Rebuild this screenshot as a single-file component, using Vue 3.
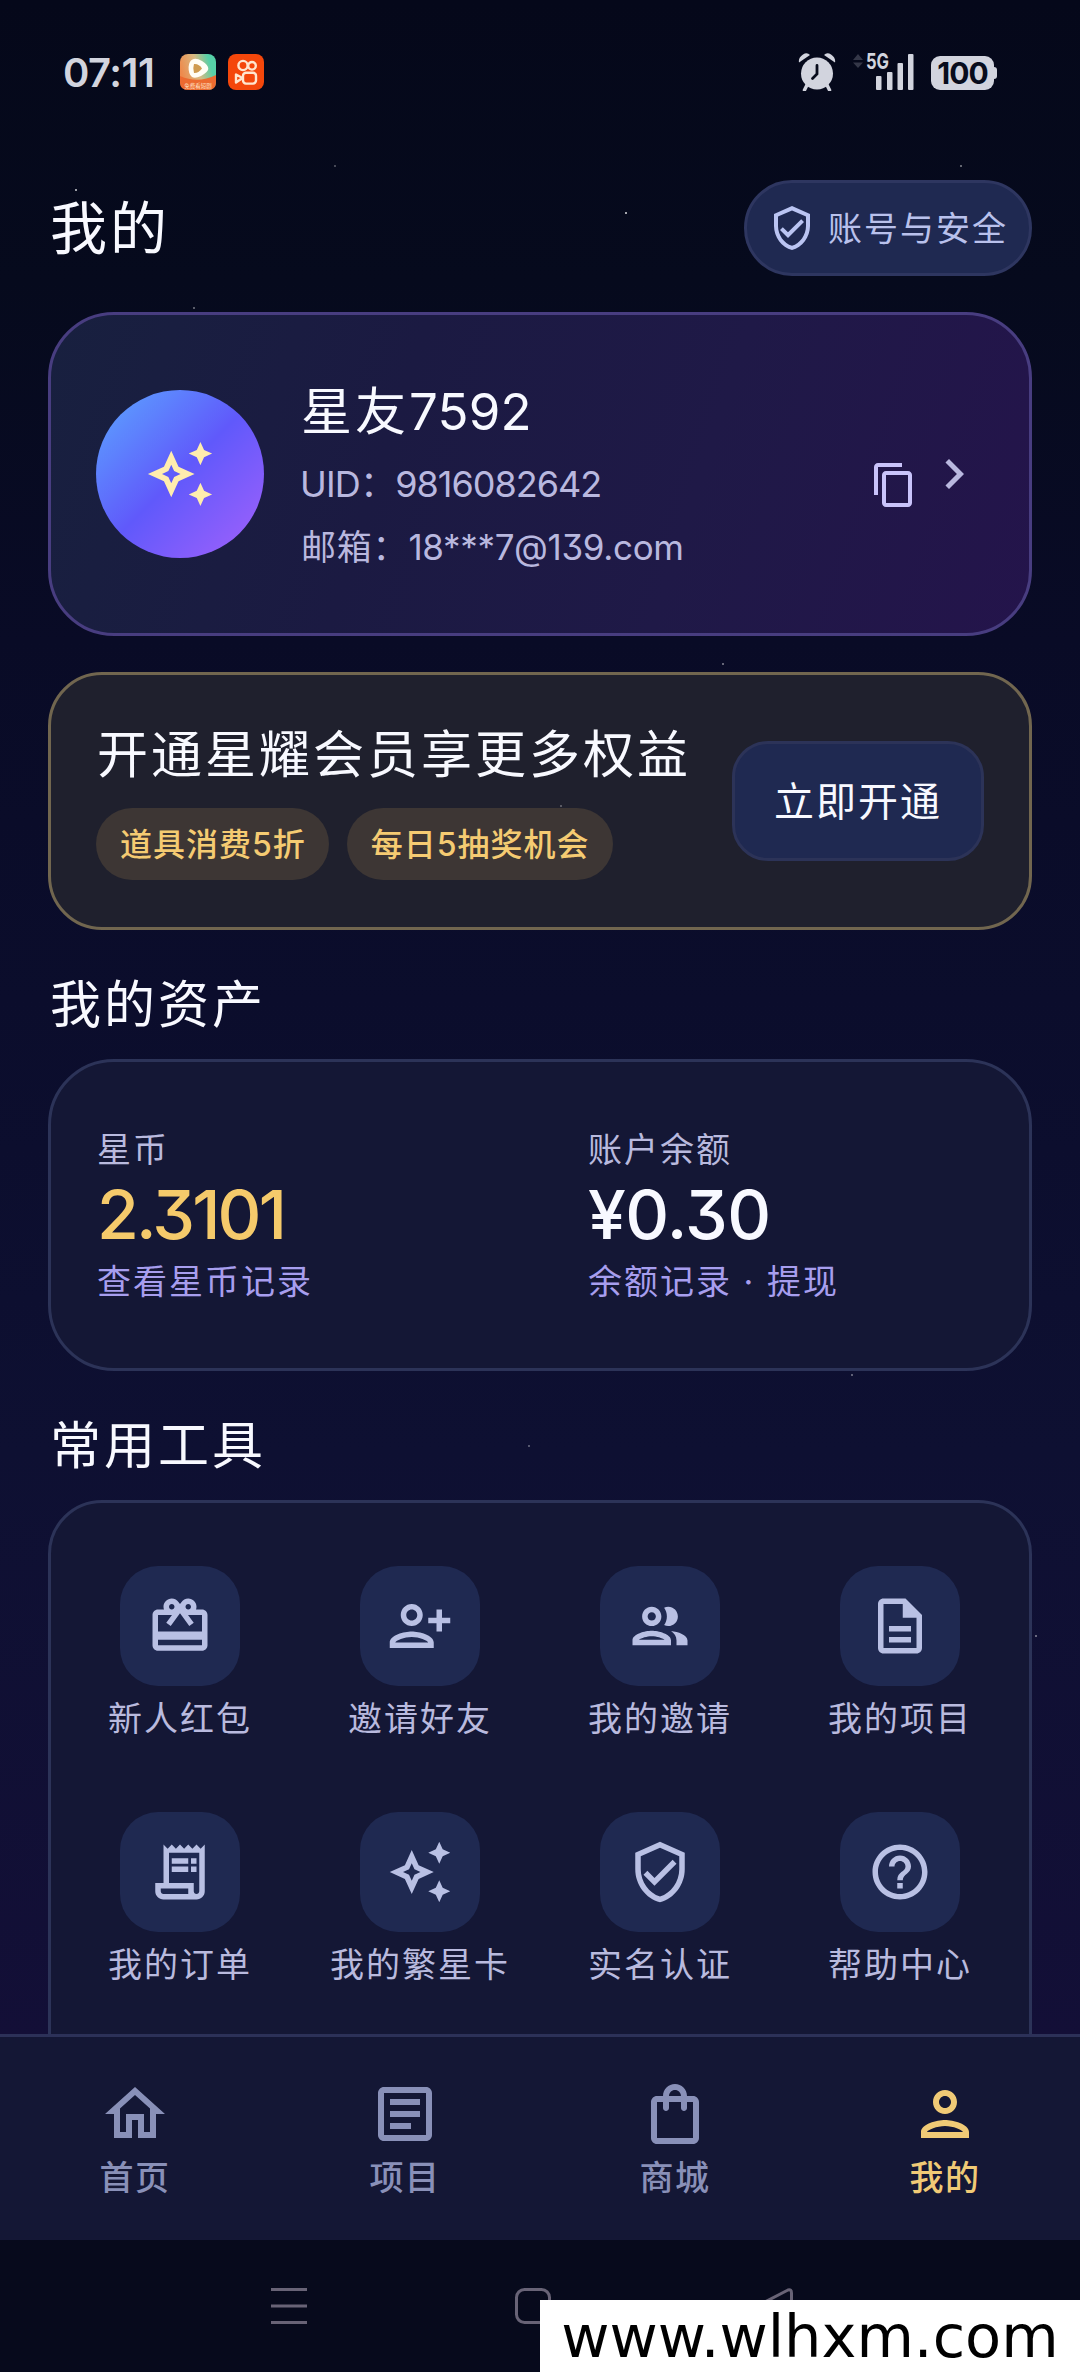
<script setup>
const paths = {
  sparkle: 'M19 9l1.25-2.75L23 5l-2.75-1.25L19 1l-1.25 2.75L15 5l2.75 1.25L19 9zM19 15l-1.25 2.75L15 19l2.75 1.25L19 23l1.25-2.75L23 19l-2.75-1.25L19 15zM11.5 9.5L9 4 6.5 9.5 1 12l5.5 2.5L9 20l2.5-5.5L17 12l-5.5-2.5zM9.99 12.99L9 15.17l-.99-2.18L5.83 12l2.18-.99L9 8.83l.99 2.18 2.18.99-2.18.99z',
  shield: 'M12 1L3 5v6c0 5.55 3.84 10.74 9 12 5.16-1.26 9-6.45 9-12V5l-9-4zm7 10c0 4.52-2.98 8.69-7 9.93-4.02-1.24-7-5.41-7-9.93V6.3l7-3.11 7 3.11V11zm-11.59.59L6 13l4 4 8-8-1.41-1.42L10 14.17z',
  copy: 'M16 1H4c-1.1 0-2 .9-2 2v14h2V3h12V1zm3 4H8c-1.1 0-2 .9-2 2v14c0 1.1.9 2 2 2h11c1.1 0 2-.9 2-2V7c0-1.1-.9-2-2-2zm0 16H8V7h11v14z',
  chevron: 'M10 6L8.59 7.41 13.17 12l-4.58 4.59L10 18l6-6z',
  redeem: 'M20 6h-2.18c.11-.31.18-.65.18-1 0-1.66-1.34-3-3-3-1.05 0-1.96.54-2.5 1.35l-.5.67-.5-.68C10.96 2.54 10.05 2 9 2 7.34 2 6 3.34 6 5c0 .35.07.69.18 1H4c-1.11 0-1.99.89-1.99 2L2 19c0 1.11.89 2 2 2h16c1.11 0 2-.89 2-2V8c0-1.11-.89-2-2-2zm-5-2c.55 0 1 .45 1 1s-.45 1-1 1-1-.45-1-1 .45-1 1-1zM9 4c.55 0 1 .45 1 1s-.45 1-1 1-1-.45-1-1 .45-1 1-1zm11 15H4v-2h16v2zm0-5H4V8h5.08L7 10.83 8.62 12 11 8.76l1-1.36 1 1.36L15.38 12 17 10.83 14.92 8H20v6z',
  personAdd: 'M13 8c0-2.21-1.79-4-4-4S5 5.79 5 8s1.79 4 4 4 4-1.79 4-4zm-2 0c0 1.1-.9 2-2 2s-2-.9-2-2 .9-2 2-2 2 .9 2 2zM1 18v2h16v-2c0-2.66-5.33-4-8-4s-8 1.34-8 4zm2 0c.2-.71 3.3-2 6-2 2.69 0 5.78 1.28 6 2H3zM20 9V6h-2v3h-3v2h3v3h2v-3h3V9h-3z',
  group: 'M9 13.75c-2.34 0-7 1.17-7 3.5V19h14v-1.75c0-2.33-4.66-3.5-7-3.5zM4.34 17c.84-.58 2.87-1.25 4.66-1.25s3.82.67 4.66 1.25H4.34zM9 12c1.93 0 3.5-1.57 3.5-3.5S10.93 5 9 5 5.5 6.57 5.5 8.5 7.07 12 9 12zm0-5c.83 0 1.5.67 1.5 1.5S9.83 10 9 10s-1.5-.67-1.5-1.5S8.17 7 9 7zm7.04 6.81c1.16.84 1.96 1.96 1.96 3.44V19h4v-1.75c0-2.02-3.5-3.17-5.96-3.44zM15 12c1.93 0 3.5-1.57 3.5-3.5S16.93 5 15 5c-.54 0-1.04.13-1.5.35.63.89 1 1.98 1 3.15s-.37 2.26-1 3.15c.46.22.96.35 1.5.35z',
  doc: 'M8 16h8v2H8zm0-4h8v2H8zm6-10H6c-1.1 0-2 .9-2 2v16c0 1.1.89 2 1.99 2H18c1.1 0 2-.9 2-2V8l-6-6zm4 18H6V4h7v5h5v11z',
  receipt: 'M19.5 3.5L18 2l-1.5 1.5L15 2l-1.5 1.5L12 2l-1.5 1.5L9 2 7.5 3.5 6 2v14H3v3c0 1.66 1.34 3 3 3h12c1.66 0 3-1.34 3-3V2l-1.5 1.5zM15 20H6c-.55 0-1-.45-1-1v-1h10v2zm4-1c0 .55-.45 1-1 1s-1-.45-1-1v-3H8V5h11v14zM9 7h6v2H9zM16 7h2v2h-2zM9 10h6v2H9zM16 10h2v2h-2z',
  help: 'M11 18h2v-2h-2v2zm1-16C6.48 2 2 6.48 2 12s4.48 10 10 10 10-4.48 10-10S17.52 2 12 2zm0 18c-4.41 0-8-3.59-8-8s3.59-8 8-8 8 3.59 8 8-3.59 8-8 8zm0-14c-2.21 0-4 1.79-4 4h2c0-1.1.9-2 2-2s2 .9 2 2c0 2-3 1.75-3 5h2c0-2.25 3-2.5 3-5 0-2.21-1.79-4-4-4z',
  home: 'M12 5.69l5 4.5V18h-2v-6H9v6H7v-7.81l5-4.5M12 3L2 12h3v8h6v-6h2v6h6v-8h3L12 3z',
  article: 'M19 5v14H5V5h14m0-2H5c-1.1 0-2 .9-2 2v14c0 1.1.9 2 2 2h14c1.1 0 2-.9 2-2V5c0-1.1-.9-2-2-2zM14 17H7v-2h7v2zm3-4H7v-2h10v2zm0-4H7V7h10v2z',
  bag: 'M18 6h-2c0-2.21-1.79-4-4-4S8 3.79 8 6H6c-1.1 0-2 .9-2 2v12c0 1.1.9 2 2 2h12c1.1 0 2-.9 2-2V8c0-1.1-.9-2-2-2zm-6-2c1.1 0 2 .9 2 2h-4c0-1.1.9-2 2-2zm6 16H6V8h2v2c0 .55.45 1 1 1s1-.45 1-1V8h4v2c0 .55.45 1 1 1s1-.45 1-1V8h2v12z',
  person: 'M12 6c1.1 0 2 .9 2 2s-.9 2-2 2-2-.9-2-2 .9-2 2-2m0 10c2.7 0 5.8 1.29 6 2H6c.23-.72 3.31-2 6-2m0-12C9.79 4 8 5.79 8 8s1.79 4 4 4 4-1.79 4-4-1.79-4-4-4zm0 10c-2.67 0-8 1.34-8 4v2h16v-2c0-2.66-5.33-4-8-4z',
}

const tools = [
  { icon: 'redeem', label: '新人红包' },
  { icon: 'personAdd', label: '邀请好友' },
  { icon: 'group', label: '我的邀请' },
  { icon: 'doc', label: '我的项目' },
  { icon: 'receipt', label: '我的订单' },
  { icon: 'sparkle', label: '我的繁星卡' },
  { icon: 'shield', label: '实名认证' },
  { icon: 'help', label: '帮助中心' },
]

const tabs = [
  { icon: 'home', label: '首页' },
  { icon: 'article', label: '项目' },
  { icon: 'bag', label: '商城' },
  { icon: 'person', label: '我的', active: true },
]

const stars = [
  [335, 166, 0.35], [76, 190, 0.8], [626, 213, 0.85], [961, 166, 0.5], [194, 308, 0.45],
  [723, 664, 0.5], [561, 806, 0.35], [852, 1375, 0.45], [529, 1446, 0.4], [1036, 1636, 0.5],
]
</script>

<template>
  <div class="screen">
    <header class="status">
      <span class="time">07:11</span>
      <svg class="app" viewBox="0 0 36 36">
        <defs>
          <linearGradient id="video" x1="0" y1="0.4" x2="1" y2="0.1">
            <stop offset="0" stop-color="#ee8a4c" />
            <stop offset="0.45" stop-color="#d9b981" />
            <stop offset="0.8" stop-color="#56d0a8" />
          </linearGradient>
        </defs>
        <rect width="36" height="36" rx="8" fill="url(#video)" />
        <path d="M0 22 Q18 30 36 21 V28 Q36 36 28 36 H8 Q0 36 0 28Z" fill="#ec6a30" />
        <path d="M12.5 5.5Q9 7 8.6 13Q8.300 20 12 23Q15 25 21 22Q28 18 28.300 15Q28.500 11 22 7Q16 3.500 12.500 5.500Z" fill="#fffdf5" />
        <path d="M14 10Q12.500 14 14 19Q18 19.500 22 14.500Q19 9.500 14 10Z" fill="#cf9b50" />
        <text x="18" y="33.500" text-anchor="middle" font-size="5.500" fill="#ffe3c8">免费看短剧</text>
      </svg>
      <svg class="app second" viewBox="0 0 36 36">
        <rect width="36" height="36" rx="8" fill="#f4470b" />
        <g fill="none" stroke="#ffe6cf" stroke-width="2.400">
          <circle cx="15" cy="11.500" r="4.600" />
          <circle cx="24" cy="11.800" r="3.800" />
          <rect x="15" y="18.800" width="13" height="10.800" rx="3" />
          <path d="M14.500 24L8 20.500V28.500Z" stroke-linejoin="round" />
        </g>
      </svg>
      <span class="grow"></span>
      <svg class="alarm" viewBox="0 0 38 38" fill="#d2d4de">
        <path d="M1 9.500Q0 5 5 1.500Q9 -1 12 2Z" />
        <path d="M37 9.500Q38 5 33 1.500Q29 -1 26 2Z" />
        <circle cx="19" cy="20.500" r="16" />
        <path d="M9 32L6.500 37M29 32L31.500 37" stroke="#d2d4de" stroke-width="3.500" stroke-linecap="round" />
        <path d="M19 12.500V21L14.500 25.500" fill="none" stroke="#080c1c" stroke-width="2.800" stroke-linecap="round" />
      </svg>
      <svg class="signal" viewBox="0 -8 62 46">
        <path d="M6 1L11 7H1ZM6 15L11 9.500H1Z" fill="#343748" />
        <text x="14" y="16" class="net" textLength="23" lengthAdjust="spacingAndGlyphs">5G</text>
        <g fill="#d2d4de">
          <rect x="24" y="23" width="5.500" height="14" rx="1" />
          <rect x="35" y="19" width="5.500" height="18" rx="1" />
          <rect x="45.500" y="10" width="5.500" height="27" rx="1" />
          <rect x="56" y="1" width="5.500" height="36" rx="1" />
        </g>
      </svg>
      <div class="battery"><b>100</b></div>
      <i class="nub"></i>
    </header>

    <div class="head">
      <h1>我的</h1>
      <div class="safe">
        <svg viewBox="0 0 24 24"><path :d="paths.shield" /></svg>
        <span>账号与安全</span>
      </div>
    </div>

    <section class="card profile">
      <div class="avatar"><svg viewBox="0 0 24 24"><path :d="paths.sparkle" /></svg></div>
      <div class="info">
        <div class="name">星友<span>7592</span></div>
        <div class="line uid">UID：<span>9816082642</span></div>
        <div class="line mail">邮箱：<span>18***7@139.com</span></div>
      </div>
      <svg class="copy" viewBox="0 0 24 24"><path :d="paths.copy" /></svg>
      <svg class="chevron" viewBox="0 0 24 24"><path :d="paths.chevron" /></svg>
    </section>

    <section class="card vip">
      <div>
        <div class="vip-title">开通星耀会员享更多权益</div>
        <div class="chips"><span>道具消费5折</span><span>每日5抽奖机会</span></div>
      </div>
      <div class="open">立即开通</div>
    </section>

    <h2>我的资产</h2>
    <section class="card assets">
      <div class="asset">
        <div class="label">星币</div>
        <div class="value gold">2.3101</div>
        <div class="link">查看星币记录</div>
      </div>
      <div class="asset">
        <div class="label">账户余额</div>
        <div class="value">¥0.30</div>
        <div class="link">余额记录 · 提现</div>
      </div>
    </section>

    <h2>常用工具</h2>
    <section class="card tools">
      <div v-for="t in tools" :key="t.label" class="tool">
        <div class="tile"><svg viewBox="0 0 24 24"><path :d="paths[t.icon]" /></svg></div>
        <span>{{ t.label }}</span>
      </div>
    </section>

    <nav class="tabs">
      <div v-for="t in tabs" :key="t.label" class="tab" :class="{ active: t.active }">
        <svg viewBox="0 0 24 24"><path :d="paths[t.icon]" /></svg>
        <span>{{ t.label }}</span>
      </div>
    </nav>

    <footer class="system">
      <svg viewBox="0 0 40 40"><path d="M2 3.500H38M2 20H38M2 36.500H38" /></svg>
      <svg viewBox="0 0 40 40"><rect x="3.500" y="3.500" width="33" height="33" rx="8" /></svg>
      <svg viewBox="0 0 40 40"><path d="M31 4L3 18.500Q0.500 20 3 21.500L31 36Q34.500 37 34.500 33V7Q34.500 3 31 4Z" /></svg>
    </footer>

    <i
      v-for="(s, i) in stars"
      :key="i"
      class="star"
      :style="{ left: s[0] - 1 + 'px', top: s[1] - 1 + 'px', opacity: s[2] }"
    ></i>
    <div class="site">www.wlhxm.com</div>
  </div>
</template>

<style>
body {
  margin: 0;
  background: #070a1c;
}
</style>

<style scoped>
.screen {
  position: relative;
  display: flex;
  flex-direction: column;
  width: 1080px;
  height: 2372px;
  overflow: hidden;
  box-sizing: border-box;
  background: linear-gradient(180deg, #05081a 0, #060a1d 280px, #090b26 640px, #0b0d2c 1000px, #0e1032 1450px, #130f37 2040px);
  color: #f8f9ff;
  font-family: Inter, "Noto Sans CJK SC", sans-serif;
  font-feature-settings: "cv09";
  white-space: nowrap;
}
svg {
  display: block;
  flex: none;
}
.status {
  flex: none;
  display: flex;
  align-items: center;
  height: 144px;
  padding: 0 83px 0 63px;
  box-sizing: border-box;
}
.time {
  width: 117px;
  font-size: 40px;
  font-weight: 600;
  letter-spacing: -0.5px;
  color: #d2d4de;
}
.app {
  width: 36px;
  height: 36px;
}
.second {
  margin-left: 12px;
}
.grow {
  flex: 1;
}
.alarm {
  width: 38px;
  height: 38px;
  margin-right: 16px;
}
.signal {
  width: 62px;
  height: 46px;
  margin: -8px 17px 0 0;
}
.net {
  font-size: 22px;
  font-weight: 700;
  fill: #d2d4de;
}
.battery {
  display: flex;
  align-items: center;
  justify-content: center;
  width: 63px;
  height: 34px;
  margin-top: 2px;
  border-radius: 9px;
  background: #d2d4de;
  color: #080c1c;
}
.battery b {
  font-size: 30px;
  font-weight: 700;
  letter-spacing: -1px;
}
.nub {
  width: 3px;
  height: 12px;
  margin-top: 2px;
  border-radius: 0 3px 3px 0;
  background: #d2d4de;
}
.head {
  flex: none;
  display: flex;
  justify-content: space-between;
  align-items: center;
  height: 96px;
  margin: 36px 48px 36px 50px;
}
h1 {
  margin: 0;
  padding-bottom: 8px;
  font-size: 57px;
  font-weight: 400;
  letter-spacing: 3px;
}
.safe {
  display: flex;
  align-items: center;
  gap: 12px;
  width: 288px;
  height: 96px;
  padding-left: 21px;
  box-sizing: border-box;
  border: 3px solid #2e3660;
  border-radius: 48px;
  background: #1f2951;
  color: #b9c1ec;
  font-size: 34px;
  letter-spacing: 2px;
}
.safe svg {
  width: 48px;
  height: 48px;
  fill: #bac4f2;
}
.safe span {
  padding-bottom: 4px;
}
.card {
  flex: none;
  box-sizing: border-box;
  margin: 0 48px;
  border: 3px solid #2c3358;
  background: #141735;
}
.profile {
  display: flex;
  align-items: center;
  height: 324px;
  padding: 0 45px;
  border-color: #483d80;
  border-radius: 66px;
  background: linear-gradient(108deg, #18203f 0%, #1b1a42 35%, #1f1947 65%, #24144b 100%);
}
.avatar {
  display: flex;
  align-items: center;
  justify-content: center;
  width: 168px;
  height: 168px;
  margin-right: 36px;
  border-radius: 50%;
  background: linear-gradient(135deg, #5ba8ff 0%, #6059fb 50%, #a461fb 100%);
}
.avatar svg {
  width: 70px;
  height: 70px;
  fill: #ffedae;
}
.info {
  flex: 1;
}
.name {
  height: 66px;
  margin: 2px 0 15px;
  padding-left: 1px;
  font-size: 51px;
  line-height: 66px;
  letter-spacing: 3px;
}
.name span {
  letter-spacing: 0.2px;
}
.line {
  height: 48px;
  margin-bottom: 15px;
  color: #b9b8df;
  font-size: 36px;
  line-height: 48px;
}
.uid {
  letter-spacing: -0.8px;
}
.uid span {
  letter-spacing: -1px;
}
.mail {
  margin-bottom: 0;
  padding-left: 1px;
  font-size: 35px;
  letter-spacing: 0.8px;
}
.mail span {
  letter-spacing: -0.35px;
}
.copy {
  width: 48px;
  height: 48px;
  margin: 22px 6px 0 0;
  fill: #c9c3fa;
}
.chevron {
  width: 60px;
  height: 60px;
  fill: #b9b8df;
}
.vip {
  display: flex;
  align-items: center;
  justify-content: space-between;
  height: 258px;
  margin-top: 36px;
  padding: 0 45px;
  border-color: #71664f;
  border-radius: 54px;
  background: #1f202d;
}
.vip-title {
  height: 66px;
  margin-bottom: 20px;
  padding-left: 1px;
  font-size: 51px;
  line-height: 66px;
  letter-spacing: 3px;
}
.chips {
  display: flex;
  gap: 18px;
}
.chips span {
  height: 72px;
  padding: 0 23px 0 24px;
  border-radius: 36px;
  background: #3d3634;
  color: #f5cb72;
  font-size: 32px;
  font-weight: 500;
  line-height: 74px;
  letter-spacing: 1px;
}
.open {
  width: 252px;
  height: 120px;
  box-sizing: border-box;
  border: 3px solid #2c3358;
  border-radius: 36px;
  background: #1f2951;
  font-size: 40px;
  line-height: 116px;
  letter-spacing: 2px;
  text-align: center;
}
h2 {
  flex: none;
  height: 66px;
  margin: 42px 50px 21px;
  font-size: 51px;
  font-weight: 400;
  line-height: 66px;
  letter-spacing: 3px;
}
.assets {
  display: flex;
  height: 312px;
  border-radius: 66px;
}
.asset {
  flex: 1;
  padding: 64px 0 0 46px;
}
.asset + .asset {
  padding-left: 50px;
}
.label,
.link {
  height: 48px;
  font-size: 34px;
  line-height: 48px;
  letter-spacing: 2px;
  color: #b9bade;
}
.value {
  height: 84px;
  font-size: 68px;
  font-weight: 500;
  line-height: 81px;
  letter-spacing: -0.6px;
}
.gold {
  color: #f5ca6b;
  letter-spacing: -2.800px;
}
.link {
  color: #a79eee;
}
.tools {
  display: grid;
  grid-template-columns: repeat(4, 240px);
  grid-auto-rows: 246px;
  height: 600px;
  padding: 63px 9px 0;
  border-radius: 54px;
}
.tool {
  display: flex;
  flex-direction: column;
  align-items: center;
  color: #b9bade;
  font-size: 34px;
  line-height: 48px;
  letter-spacing: 2px;
}
.tile {
  display: flex;
  align-items: center;
  justify-content: center;
  width: 120px;
  height: 120px;
  margin-bottom: 9px;
  border-radius: 38px;
  background: #1f2951;
}
.tile svg {
  width: 66px;
  height: 66px;
  fill: #b9c0e4;
}
.tabs {
  position: absolute;
  left: 0;
  right: 0;
  bottom: 132px;
  display: flex;
  height: 206px;
  box-sizing: border-box;
  border-top: 3px solid #2c3158;
  background: #141735;
}
.tab {
  display: flex;
  flex: 1;
  flex-direction: column;
  align-items: center;
  padding-top: 41px;
  color: #8990b8;
  font-size: 34px;
  font-weight: 500;
  line-height: 48px;
  letter-spacing: 1.5px;
}
.tab svg {
  width: 72px;
  height: 72px;
  margin-bottom: 4px;
  fill: currentColor;
}
.tab.active {
  color: #f0ca76;
}
.system {
  position: absolute;
  left: 0;
  right: 0;
  bottom: 0;
  display: flex;
  justify-content: center;
  gap: 204px;
  height: 132px;
  box-sizing: border-box;
  padding: 46px 14px 0 0;
  background: #070a1c;
}
.system svg {
  width: 40px;
  height: 40px;
  fill: none;
  stroke: #686376;
  stroke-width: 3;
}
.star {
  position: absolute;
  width: 2px;
  height: 2px;
  border-radius: 50%;
  background: #fff;
}
.site {
  position: absolute;
  right: 0;
  bottom: 0;
  width: 540px;
  height: 72px;
  background: #fff;
  color: #000;
  font: 59px/74px "DejaVu Sans", sans-serif;
  text-align: center;
}
</style>
